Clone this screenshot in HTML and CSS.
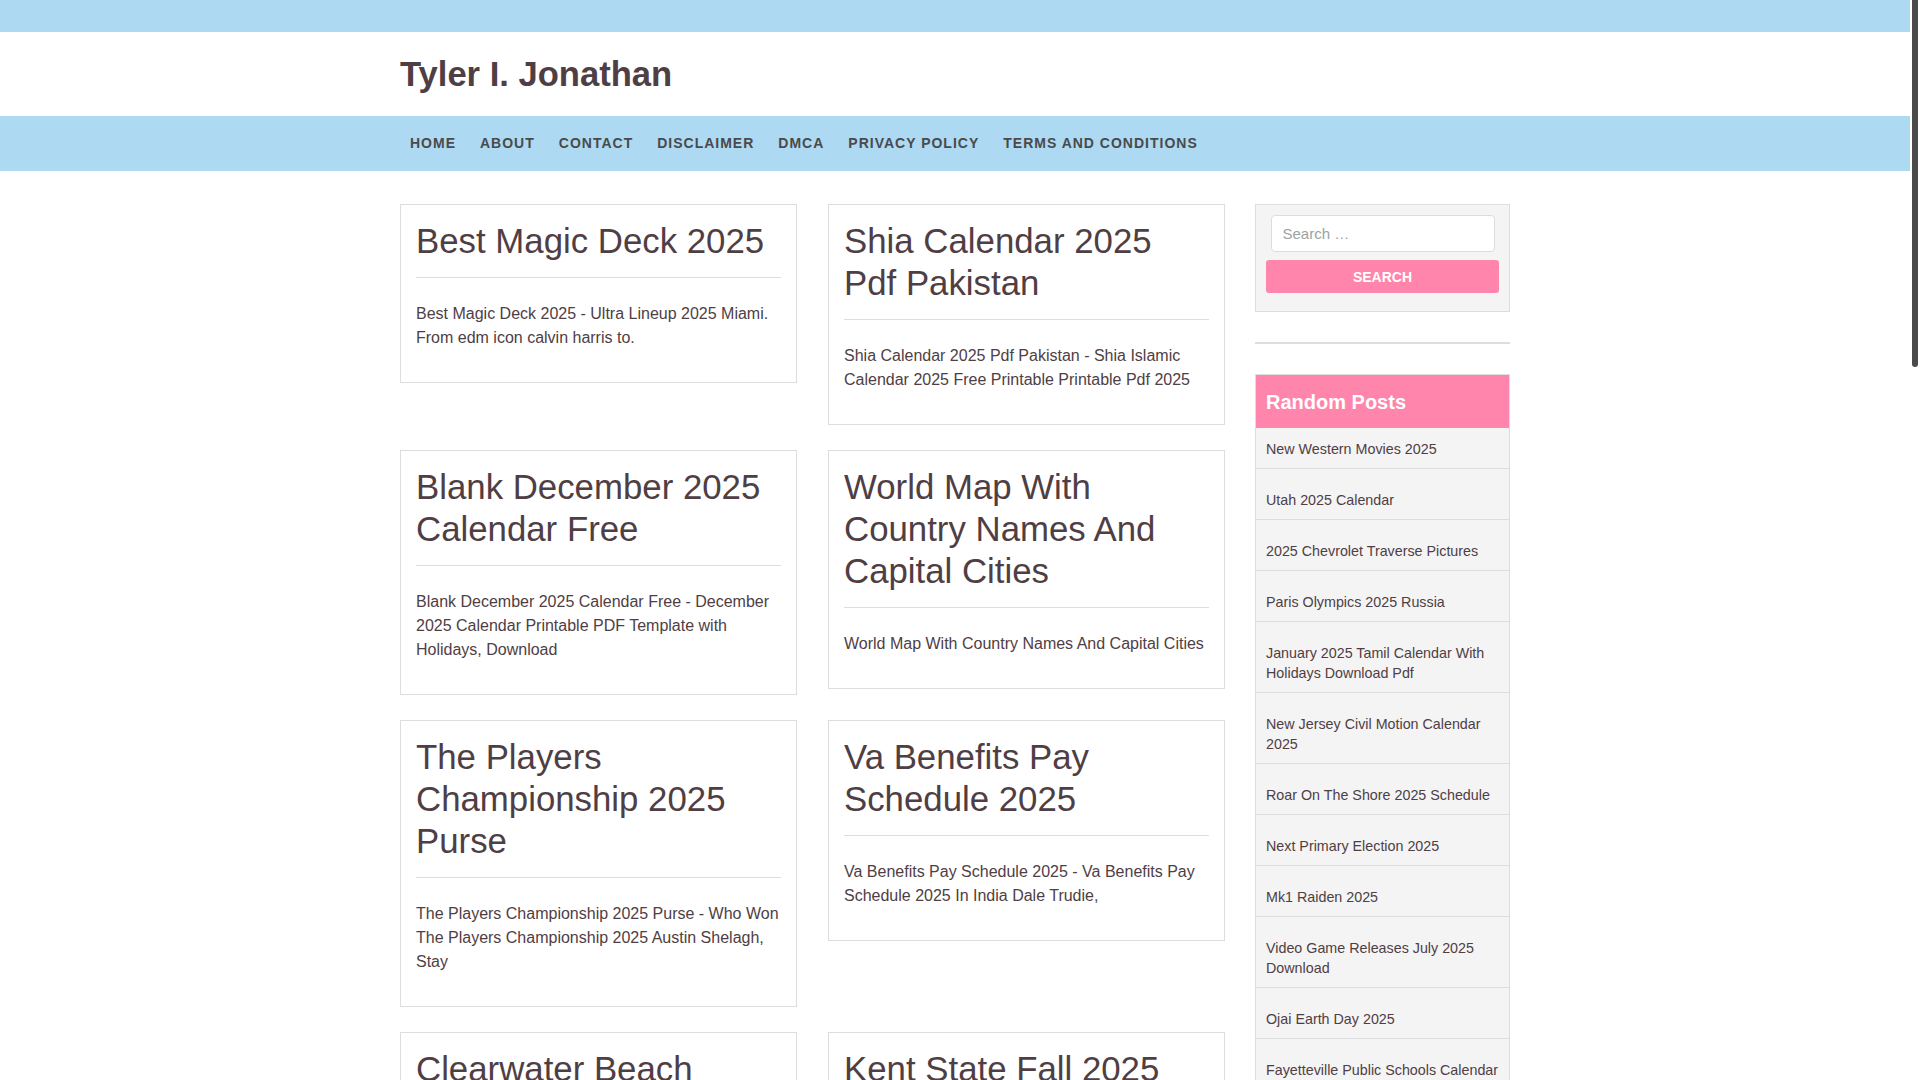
FILE: index.html
```html
<!DOCTYPE html>
<html lang="en">
<head>
<meta charset="utf-8">
<title>Tyler I. Jonathan</title>
<link rel="stylesheet" href="styles.css">
</head>
<body>
<div class="scroll-track" aria-hidden="true"><div class="scroll-thumb"></div></div>
<div class="topbar"></div>
<header class="site-header">
  <div class="container header-inner">
    <h1 class="site-title"><a href="#">Tyler I. Jonathan</a></h1>
  </div>
</header>
<nav class="main-nav">
  <div class="container">
    <ul class="menu">
      <li><a href="#">Home</a></li>
      <li><a href="#">About</a></li>
      <li><a href="#">Contact</a></li>
      <li><a href="#">Disclaimer</a></li>
      <li><a href="#">DMCA</a></li>
      <li><a href="#">Privacy Policy</a></li>
      <li><a href="#">Terms and Conditions</a></li>
    </ul>
  </div>
</nav>

<div class="container content">
  <main class="posts">
    <article class="post">
      <header class="post-head"><h2 class="post-title"><a href="#">Best Magic Deck 2025</a></h2></header>
      <div class="post-excerpt"><p>Best Magic Deck 2025 - Ultra Lineup 2025 Miami. From edm icon calvin harris to.</p></div>
    </article>
    <article class="post">
      <header class="post-head"><h2 class="post-title"><a href="#">Shia Calendar 2025 Pdf Pakistan</a></h2></header>
      <div class="post-excerpt"><p>Shia Calendar 2025 Pdf Pakistan - Shia Islamic Calendar 2025 Free Printable Printable Pdf 2025</p></div>
    </article>
    <article class="post">
      <header class="post-head"><h2 class="post-title"><a href="#">Blank December 2025 Calendar Free</a></h2></header>
      <div class="post-excerpt"><p>Blank December 2025 Calendar Free - December 2025 Calendar Printable PDF Template with Holidays, Download</p></div>
    </article>
    <article class="post">
      <header class="post-head"><h2 class="post-title"><a href="#">World Map With Country Names And Capital Cities</a></h2></header>
      <div class="post-excerpt"><p>World Map With Country Names And Capital Cities</p></div>
    </article>
    <article class="post">
      <header class="post-head"><h2 class="post-title"><a href="#">The Players Championship 2025 Purse</a></h2></header>
      <div class="post-excerpt"><p>The Players Championship 2025 Purse - Who Won The Players Championship 2025 Austin Shelagh, Stay</p></div>
    </article>
    <article class="post">
      <header class="post-head"><h2 class="post-title"><a href="#">Va Benefits Pay Schedule 2025</a></h2></header>
      <div class="post-excerpt"><p>Va Benefits Pay Schedule 2025 - Va Benefits Pay Schedule 2025 In India Dale Trudie,</p></div>
    </article>
    <article class="post">
      <header class="post-head"><h2 class="post-title"><a href="#">Clearwater Beach Events 2025</a></h2></header>
      <div class="post-excerpt"><p>Clearwater Beach Events 2025 - Clearwater Beach Events Calendar 2025 Dates, Times and Locations</p></div>
    </article>
    <article class="post">
      <header class="post-head"><h2 class="post-title"><a href="#">Kent State Fall 2025 Calendar</a></h2></header>
      <div class="post-excerpt"><p>Kent State Fall 2025 Calendar - Kent State Academic Calendar 2025 Printable Free</p></div>
    </article>
    <article class="post">
      <header class="post-head"><h2 class="post-title"><a href="#">Nfl Draft Order 2025</a></h2></header>
      <div class="post-excerpt"><p>Nfl Draft Order 2025 - Full Draft Order For All Seven Rounds Of The 2025 Nfl Draft</p></div>
    </article>
    <article class="post">
      <header class="post-head"><h2 class="post-title"><a href="#">Easter Sunday 2025 Date</a></h2></header>
      <div class="post-excerpt"><p>Easter Sunday 2025 Date - When Is Easter 2025 And How Is The Date Decided</p></div>
    </article>
    <article class="post">
      <header class="post-head"><h2 class="post-title"><a href="#">Toyota Camry 2025 Interior</a></h2></header>
      <div class="post-excerpt"><p>Toyota Camry 2025 Interior - First Look At The New Toyota Camry 2025 Cabin</p></div>
    </article>
    <article class="post">
      <header class="post-head"><h2 class="post-title"><a href="#">Summer Solstice 2025 Time</a></h2></header>
      <div class="post-excerpt"><p>Summer Solstice 2025 Time - Longest Day Of The Year 2025 Sunrise And Sunset</p></div>
    </article>
    <article class="post">
      <header class="post-head"><h2 class="post-title"><a href="#">Printable 2025 Yearly Calendar</a></h2></header>
      <div class="post-excerpt"><p>Printable 2025 Yearly Calendar - Free Printable 2025 Calendar Templates With Holidays</p></div>
    </article>
    <article class="post">
      <header class="post-head"><h2 class="post-title"><a href="#">Fifa Club World Cup 2025 Schedule</a></h2></header>
      <div class="post-excerpt"><p>Fifa Club World Cup 2025 Schedule - Full Fixtures, Dates And Venues</p></div>
    </article>
  </main>

  <aside class="sidebar">
    <section class="widget widget-search">
      <form class="search-form">
        <input class="search-field" type="search" placeholder="Search …">
        <button class="search-submit" type="button">Search</button>
      </form>
    </section>
    <hr class="widget-sep">
    <section class="widget widget-random">
      <h3 class="widget-title">Random Posts</h3>
      <ul class="random-list">
        <li><a href="#">New Western Movies 2025</a></li>
        <li><a href="#">Utah 2025 Calendar</a></li>
        <li><a href="#">2025 Chevrolet Traverse Pictures</a></li>
        <li><a href="#">Paris Olympics 2025 Russia</a></li>
        <li><a href="#">January 2025 Tamil Calendar With Holidays Download Pdf</a></li>
        <li><a href="#">New Jersey Civil Motion Calendar 2025</a></li>
        <li><a href="#">Roar On The Shore 2025 Schedule</a></li>
        <li><a href="#">Next Primary Election 2025</a></li>
        <li><a href="#">Mk1 Raiden 2025</a></li>
        <li><a href="#">Video Game Releases July 2025 Download</a></li>
        <li><a href="#">Ojai Earth Day 2025</a></li>
        <li><a href="#">Fayetteville Public Schools Calendar 2025-26</a></li>
        <li><a href="#">Honda Cr-V 2025 Colors</a></li>
        <li><a href="#">Ramadan 2025 Start Date</a></li>
        <li><a href="#">Best Budget Phones 2025</a></li>
      </ul>
    </section>
  </aside>
</div>

<footer class="site-footer">
  <div class="container">Copyright © 2025 Tyler I. Jonathan</div>
</footer>
</body>
</html>
```
FILE: styles.css
```css
* { box-sizing: border-box; }

html { scrollbar-width: none; }
html::-webkit-scrollbar { display: none; }

body {
  margin: 0;
  padding-right: 10px;
  font-family: "Liberation Sans", Arial, sans-serif;
  font-size: 16px;
  line-height: 1.5;
  color: #4f3e44;
  background: #ffffff;
}

a { color: inherit; text-decoration: none; }

/* decorative scrollbar, drawn over the right edge */
.scroll-track {
  position: fixed;
  top: 0;
  right: 0;
  width: 10px;
  height: 100vh;
  background: #ffffff;
  z-index: 10;
}

.scroll-thumb {
  margin: 0 2px 0 2px;
  height: 367px;
  background: #4a4a4a;
  border-radius: 0 0 3px 3px;
}

.container {
  width: 1110px;
  margin: 0 auto;
}

.topbar {
  height: 32px;
  background: #add9f3;
}

.site-header { background: #ffffff; }

.header-inner {
  height: 84px;
  display: flex;
  align-items: center;
  padding-top: 1px;
}

.site-title {
  margin: 0;
  font-size: 34.6px;
  line-height: 1.2;
  font-weight: bold;
  color: #4f3e44;
}

.main-nav {
  background: #add9f3;
  height: 55px;
}

.menu {
  list-style: none;
  margin: 0;
  padding: 0;
  display: flex;
  gap: 4px;
}

.menu a {
  display: block;
  padding: 0 10px;
  line-height: 55px;
  font-size: 14px;
  font-weight: bold;
  letter-spacing: 1px;
  text-transform: uppercase;
  color: #4a4a4a;
}

.content {
  display: grid;
  grid-template-columns: 825px 255px;
  column-gap: 30px;
  padding-top: 33px;
  padding-bottom: 40px;
  align-items: start;
}

.posts {
  display: grid;
  grid-template-columns: 397px 397px;
  column-gap: 31px;
  row-gap: 25px;
  align-items: start;
}

.post {
  border: 1px solid #dddddd;
  padding: 14px 15px 16px;
  background: #ffffff;
}

.post-head {
  padding-bottom: 16px;
  border-bottom: 1px solid #dddddd;
  margin-bottom: 24px;
}

.post-title {
  margin: 0;
  font-size: 34.8px;
  line-height: 42px;
  padding-top: 1px;
  margin-bottom: -1px;
  font-weight: normal;
  color: #4f3e44;
}

.post-excerpt p {
  margin: 0 0 16px;
  font-size: 16px;
  line-height: 24px;
}

.widget-search {
  border: 1px solid #dddddd;
  background: #f4f4f4;
  padding: 10px;
}

.search-form { display: flex; flex-direction: column; }

.search-field {
  margin: 0 4.5px 8px;
  height: 37px;
  padding: 0 11px;
  border: 1px solid #dddddd;
  border-radius: 4px;
  background: #ffffff;
  font-family: "Liberation Sans", Arial, sans-serif;
  font-size: 15px;
  color: #4f3e44;
  outline: none;
}

.search-field::placeholder { color: #9aa3a3; }

.search-submit {
  height: 33px;
  margin-bottom: 8px;
  border: none;
  border-radius: 3px;
  background: #ff85ad;
  color: #ffffff;
  font-family: "Liberation Sans", Arial, sans-serif;
  font-size: 14px;
  font-weight: bold;
  text-transform: uppercase;
}

.widget-sep {
  margin: 30px 0;
  border: 0;
  border-top: 2px solid #dddddd;
  height: 0;
}

.widget-random {
  border: 1px solid #dddddd;
  background: #f4f4f4;
}

.widget-title {
  margin: 0;
  padding: 16px 10px 14px;
  background: #ff85ad;
  color: #ffffff;
  font-size: 20px;
  line-height: 23px;
  font-weight: bold;
}

.random-list {
  list-style: none;
  margin: 0;
  padding: 0;
}

.random-list li {
  padding: 21px 10px 9px;
  border-bottom: 1px solid #dddddd;
  font-size: 14.3px;
  line-height: 20px;
}

.random-list li:first-child { padding-top: 11px; }
.random-list li:last-child { border-bottom: 0; }

.site-footer {
  background: #add9f3;
  color: #4a4a4a;
  font-size: 14px;
  line-height: 20px;
  padding: 20px 0;
}
```
